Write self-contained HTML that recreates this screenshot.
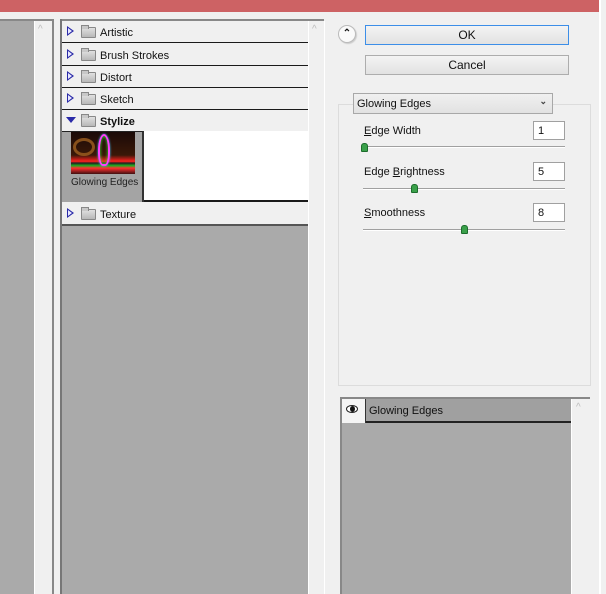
<!DOCTYPE html>
<html><head><style>
*{margin:0;padding:0;box-sizing:border-box}
body{width:606px;height:594px;overflow:hidden;background:#f0f0f0;position:relative;font-family:"Liberation Sans",sans-serif;font-size:11px;color:#111}
.a{position:absolute}
.row{position:absolute;left:62px;width:246px;height:22px;background:#f0f0f0;border-bottom:1px solid #1a1a1a}
.row .tri{position:absolute;left:5px;top:5px;width:0;height:0;border-top:5px solid transparent;border-bottom:5px solid transparent;border-left:7px solid #2a2aa8}
.row .tri:after{content:"";position:absolute;left:-6px;top:-3px;border-top:3px solid transparent;border-bottom:3px solid transparent;border-left:4px solid #e8e8ff}
.row .fold{position:absolute;left:19px;top:6px;width:15px;height:11px;background:linear-gradient(#e0e0e0,#b8b8b8);border:1px solid #888;border-radius:1px}
.row .fold:before{content:"";position:absolute;left:-1px;top:-3px;width:6px;height:3px;background:#c8c8c8;border:1px solid #888;border-bottom:none}
.row span{position:absolute;left:38px;top:6px}
.btn{position:absolute;left:365px;width:204px;height:20px;background:linear-gradient(#f4f4f4,#e2e2e2);border:1px solid #adadad;text-align:center;line-height:18px;font-size:12px}
.lbl{position:absolute;left:364px;font-size:11px}
.inp{position:absolute;left:533px;width:32px;height:19px;background:#fff;border:1px solid #a0a0a0;padding:3px 0 0 4px}
.sl{position:absolute;left:363px;width:202px;height:2px;border-top:1px solid #a0a0a0;border-bottom:1px solid #fff}
.th{position:absolute;width:7px;height:9px;background:#3aa04a;border:1px solid #1c6c2c;border-radius:3px 3px 1px 1px}
</style></head><body>
<div class="a" style="left:0;top:0;width:599px;height:12px;background:#cd6264"></div>
<div class="a" style="left:599px;top:0;width:2px;height:594px;background:#fff"></div>
<div class="a" style="left:0;top:19px;width:54px;height:575px;border-top:2px solid #888"></div>
<div class="a" style="left:0;top:21px;width:34px;height:573px;background:#aaa"></div>
<div class="a" style="left:34px;top:21px;width:1px;height:573px;background:#fff"></div>
<div class="a" style="left:52px;top:19px;width:2px;height:575px;background:#888"></div>
<div class="a" style="left:38px;top:24px;color:#bbb;font-size:10px">^</div>
<div class="a" style="left:60px;top:19px;width:264px;height:2px;background:#888"></div>
<div class="a" style="left:60px;top:19px;width:2px;height:575px;background:#777"></div>
<div class="a" style="left:62px;top:225px;width:246px;height:369px;background:#aaa"></div>
<div class="a" style="left:308px;top:21px;width:1px;height:573px;background:#fff"></div>
<div class="a" style="left:324px;top:21px;width:1px;height:573px;background:#fff"></div>
<div class="a" style="left:312px;top:24px;color:#bbb;font-size:10px">^</div>
<div class="row" style="top:21px"><i class="tri"></i><i class="fold"></i><span>Artistic</span></div>
<div class="row" style="top:44px"><i class="tri"></i><i class="fold"></i><span>Brush Strokes</span></div>
<div class="row" style="top:66px"><i class="tri"></i><i class="fold"></i><span>Distort</span></div>
<div class="row" style="top:88px"><i class="tri"></i><i class="fold"></i><span>Sketch</span></div>
<div class="row" style="top:110px;border-bottom:none"><i style="position:absolute;left:4px;top:7px;border-left:5px solid transparent;border-right:5px solid transparent;border-top:6px solid #2a2aa8"></i><i class="fold"></i><span style="font-weight:bold">Stylize</span></div>
<div class="a" style="left:62px;top:131px;width:246px;height:71px;background:#fff;border-bottom:2px solid #1a1a1a"></div>
<div class="a" style="left:62px;top:131px;width:82px;height:71px;background:#a4a4a4;border-top:1px solid #222;border-right:2px solid #333"></div>
<div class="a" style="left:71px;top:132px;width:64px;height:42px;background:linear-gradient(#1a0a08 0,#3a1808 55%,#ff2020 70%,#202020 74%,#20b020 80%,#ff3030 86%,#401010 100%)"></div>
<div class="a" style="left:73px;top:138px;width:22px;height:18px;border-radius:50%;border:3px solid #a06020;opacity:.8"></div>
<div class="a" style="left:98px;top:134px;width:12px;height:32px;border-radius:50% 50% 40% 40%;border:2px solid #ff40ff;box-shadow:0 0 2px #40c0ff,inset 0 0 3px #30ff30"></div>
<div class="a" style="left:71px;top:177px;font-size:10px;color:#222">Glowing Edges</div>
<div class="row" style="top:203px"><i class="tri"></i><i class="fold"></i><span>Texture</span></div>
<div class="a" style="left:62px;top:224px;width:246px;height:2px;background:#555"></div>
<div class="a" style="left:338px;top:25px;width:18px;height:18px;border-radius:50%;background:#fafafa;border:1px solid #bbb;box-shadow:1px 1px 1px #ccc;text-align:center;font-size:10px;line-height:15px;font-weight:bold">&#8963;</div>
<div class="btn" style="top:25px;border-color:#3c8ee8">OK</div>
<div class="btn" style="top:55px">Cancel</div>
<div class="a" style="left:338px;top:104px;width:253px;height:282px;border:1px solid #dcdcdc"></div>
<div class="a" style="left:353px;top:93px;width:200px;height:21px;background:linear-gradient(#f0f0f0,#e2e2e2);border:1px solid #a8a8a8;padding:4px 0 0 3px">Glowing Edges<span style="position:absolute;right:5px;top:2px;font-size:9px;font-weight:bold;color:#444">&#8964;</span></div>
<div class="lbl" style="top:125px"><u>E</u>dge Width</div>
<div class="inp" style="top:121px">1</div>
<div class="sl" style="top:146px"></div>
<div class="th" style="left:361px;top:143px"></div>
<div class="lbl" style="top:166px">Edge <u>B</u>rightness</div>
<div class="inp" style="top:162px">5</div>
<div class="sl" style="top:188px"></div>
<div class="th" style="left:411px;top:184px"></div>
<div class="lbl" style="top:207px"><u>S</u>moothness</div>
<div class="inp" style="top:203px">8</div>
<div class="sl" style="top:229px"></div>
<div class="th" style="left:461px;top:225px"></div>
<div class="a" style="left:340px;top:397px;width:250px;height:197px;border-top:2px solid #888;border-left:2px solid #888"></div>
<div class="a" style="left:342px;top:399px;width:229px;height:195px;background:#aaa"></div>
<div class="a" style="left:342px;top:399px;width:229px;height:24px;background:#a0a0a0;border-bottom:2px solid #222"></div>
<div class="a" style="left:342px;top:399px;width:24px;height:24px;background:#f4f4f4;border-right:1px solid #333"></div>
<div class="a" style="left:346px;top:405px;width:12px;height:8px;border-radius:50%;background:#fff;border:1px solid #222"></div>
<div class="a" style="left:350px;top:406px;width:5px;height:6px;border-radius:50%;background:#111"></div>
<div class="a" style="left:369px;top:405px;font-size:11px">Glowing Edges</div>
<div class="a" style="left:571px;top:399px;width:1px;height:195px;background:#fff"></div>
<div class="a" style="left:576px;top:402px;color:#bbb;font-size:10px">^</div>
</body></html>
